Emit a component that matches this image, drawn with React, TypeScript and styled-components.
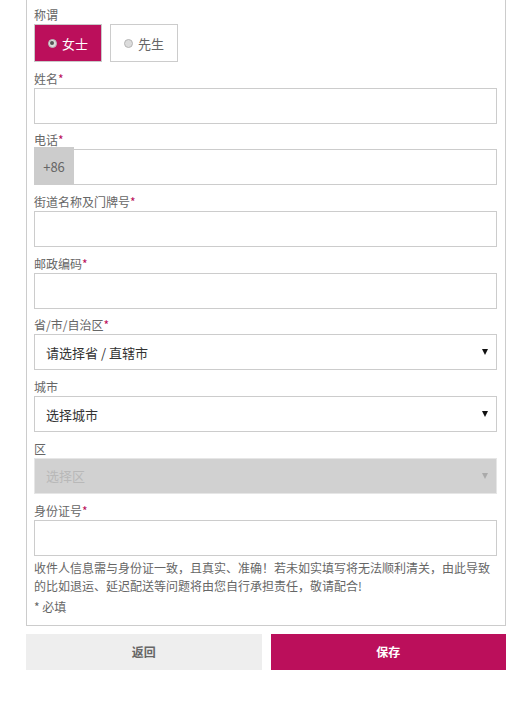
import React from "react";
import styled, { createGlobalStyle } from "styled-components";

const PRIMARY = "#bb0f5b";

const GlobalStyle = createGlobalStyle`
  * {
    box-sizing: border-box;
  }
  body {
    margin: 0;
    background: #fff;
    font-family: "Noto Sans CJK SC", "Noto Sans", sans-serif;
    color: #666;
  }
`;

const Page = styled.div`
  width: 480px;
  margin-left: 26px;
`;

const Card = styled.div`
  border: 1px solid #ccc;
  border-top: none;
  padding: 7px 8px 9px 7px;
`;

const Field = styled.div<{ $tight?: boolean }>`
  margin-bottom: ${(p) => (p.$tight ? "3px" : "8.7px")};
`;

const Label = styled.label`
  display: block;
  font-size: 12px;
  line-height: 15px;
  margin-bottom: 2px;
  color: #666;
`;

const Star = styled.span`
  color: ${PRIMARY};
`;

const TextInput = styled.input`
  display: block;
  width: 100%;
  height: 36px;
  border: 1px solid #ccc;
  border-radius: 0;
  padding: 0 10px;
  font-size: 13px;
  font-family: inherit;
  outline: none;
  background: #fff;
`;

const RadioRow = styled.div`
  display: flex;
  gap: 8px;
`;

const RadioButton = styled.div<{ $checked?: boolean }>`
  width: 68px;
  height: 38px;
  display: flex;
  align-items: center;
  justify-content: center;
  gap: 5px;
  border: 1px solid ${(p) => (p.$checked ? "#c9c9c9" : "#ccc")};
  background: ${(p) => (p.$checked ? PRIMARY : "#fff")};
  color: ${(p) => (p.$checked ? "#fff" : "#666")};
  font-size: 13px;
  cursor: pointer;
`;

const RadioDot = styled.span<{ $checked?: boolean }>`
  width: 9px;
  height: 9px;
  border-radius: 50%;
  border: 1px solid #b5b5b5;
  background: #dcdcdc;
  display: flex;
  align-items: center;
  justify-content: center;
  &::after {
    content: "";
    width: 4px;
    height: 4px;
    border-radius: 50%;
    background: ${(p) => (p.$checked ? "#555" : "transparent")};
  }
`;

const PhoneRow = styled.div`
  display: flex;
  align-items: flex-end;
  margin-top: -2px;
`;

const Prefix = styled.div`
  width: 40px;
  height: 38px;
  flex: none;
  background: #ccc;
  color: #666;
  font-size: 13px;
  display: flex;
  align-items: center;
  justify-content: center;
`;

const PhoneInput = styled(TextInput)`
  border-left: none;
  flex: 1;
`;

const SelectBox = styled.div<{ $disabled?: boolean }>`
  height: 36px;
  display: flex;
  align-items: center;
  justify-content: space-between;
  padding: 0 6px 0 11px;
  border: 1px solid ${(p) => (p.$disabled ? "#e6e6e6" : "#ccc")};
  background: ${(p) => (p.$disabled ? "#d1d1d1" : "#fff")};
  color: ${(p) => (p.$disabled ? "#b8b8b8" : "#333")};
  font-size: 13px;
`;

const Arrow = styled.span<{ $disabled?: boolean }>`
  width: 0;
  height: 0;
  border-left: 3px solid transparent;
  border-right: 3px solid transparent;
  border-top: 6px solid ${(p) => (p.$disabled ? "#aaa" : "#111")};
  margin-right: 2px;
`;

const Note = styled.p`
  margin: 0;
  font-size: 12px;
  line-height: 18px;
  color: #666;
`;

const Required = styled.p`
  margin: 3px 0 0;
  font-size: 12px;
  line-height: 18px;
  color: #666;
`;

const Buttons = styled.div`
  display: flex;
  gap: 9px;
  margin-top: 8px;
`;

const ActionButton = styled.button<{ $primary?: boolean }>`
  flex: 1;
  height: 36px;
  border: none;
  border-radius: 0;
  font-family: inherit;
  font-size: 12px;
  font-weight: bold;
  background: ${(p) => (p.$primary ? PRIMARY : "#eee")};
  color: ${(p) => (p.$primary ? "#fff" : "#666")};
  cursor: pointer;
`;

const Select: React.FC<{ text: string; disabled?: boolean }> = ({
  text,
  disabled,
}) => (
  <SelectBox $disabled={disabled}>
    <span>{text}</span>
    <Arrow $disabled={disabled} />
  </SelectBox>
);

const TextField: React.FC<{ label: string; tight?: boolean }> = ({
  label,
  tight,
}) => (
  <Field $tight={tight}>
    <Label>
      {label}
      <Star>*</Star>
    </Label>
    <TextInput />
  </Field>
);

export default function App() {
  return (
    <Page>
      <GlobalStyle />
      <Card>
        <Field>
          <Label>称谓</Label>
          <RadioRow>
            <RadioButton $checked>
              <RadioDot $checked />
              女士
            </RadioButton>
            <RadioButton>
              <RadioDot />
              先生
            </RadioButton>
          </RadioRow>
        </Field>
        <TextField label="姓名" />
        <Field>
          <Label>
            电话<Star>*</Star>
          </Label>
          <PhoneRow>
            <Prefix>+86</Prefix>
            <PhoneInput />
          </PhoneRow>
        </Field>
        <TextField label="街道名称及门牌号" />
        <TextField label="邮政编码" />
        <Field>
          <Label>
            省/市/自治区<Star>*</Star>
          </Label>
          <Select text="请选择省 / 直辖市" />
        </Field>
        <Field>
          <Label>城市</Label>
          <Select text="选择城市" />
        </Field>
        <Field>
          <Label>区</Label>
          <Select text="选择区" disabled />
        </Field>
        <TextField label="身份证号" tight />
        <Note>
          收件人信息需与身份证一致，且真实、准确！若未如实填写将无法顺利清关，由此导致的比如退运、延迟配送等问题将由您自行承担责任，敬请配合!
        </Note>
        <Required>* 必填</Required>
      </Card>
      <Buttons>
        <ActionButton>返回</ActionButton>
        <ActionButton $primary>保存</ActionButton>
      </Buttons>
    </Page>
  );
}
